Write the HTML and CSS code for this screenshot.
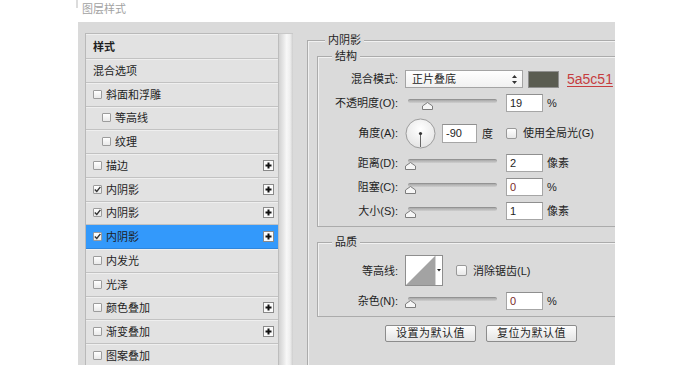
FILE: index.html
```html
<!DOCTYPE html>
<html lang="zh-CN">
<head>
<meta charset="utf-8">
<title>图层样式</title>
<link rel="stylesheet" href="styles.css">
</head>
<body>
<div class="titlebar"><span class="mark"></span><span class="title">图层样式</span></div>
<div class="panel">
  <div class="list">
    <div class="item first"><span class="name bold">样式</span></div>
    <div class="item"><span class="name">混合选项</span></div>
    <div class="item"><span class="cb"></span><span class="name">斜面和浮雕</span></div>
    <div class="item sub"><span class="cb"></span><span class="name">等高线</span></div>
    <div class="item sub"><span class="cb"></span><span class="name">纹理</span></div>
    <div class="item"><span class="cb"></span><span class="name">描边</span><span class="plus"><svg width="9" height="9" viewBox="0 0 9 9"><path d="M4.5 1.5V7.5M1.5 4.5H7.5" stroke="#111" stroke-width="2"/></svg></span></div>
    <div class="item"><span class="cb"><svg width="7" height="7" viewBox="0 0 7 7"><path d="M0.8 3.4L2.8 5.4L6.4 0.9" fill="none" stroke="#333" stroke-width="1.4"/></svg></span><span class="name">内阴影</span><span class="plus"><svg width="9" height="9" viewBox="0 0 9 9"><path d="M4.5 1.5V7.5M1.5 4.5H7.5" stroke="#111" stroke-width="2"/></svg></span></div>
    <div class="item"><span class="cb"><svg width="7" height="7" viewBox="0 0 7 7"><path d="M0.8 3.4L2.8 5.4L6.4 0.9" fill="none" stroke="#333" stroke-width="1.4"/></svg></span><span class="name">内阴影</span><span class="plus"><svg width="9" height="9" viewBox="0 0 9 9"><path d="M4.5 1.5V7.5M1.5 4.5H7.5" stroke="#111" stroke-width="2"/></svg></span></div>
    <div class="item selected"><span class="cb"><svg width="7" height="7" viewBox="0 0 7 7"><path d="M0.8 3.4L2.8 5.4L6.4 0.9" fill="none" stroke="#333" stroke-width="1.4"/></svg></span><span class="name">内阴影</span><span class="plus"><svg width="9" height="9" viewBox="0 0 9 9"><path d="M4.5 1.5V7.5M1.5 4.5H7.5" stroke="#111" stroke-width="2"/></svg></span></div>
    <div class="item"><span class="cb"></span><span class="name">内发光</span></div>
    <div class="item"><span class="cb"></span><span class="name">光泽</span></div>
    <div class="item"><span class="cb"></span><span class="name">颜色叠加</span><span class="plus"><svg width="9" height="9" viewBox="0 0 9 9"><path d="M4.5 1.5V7.5M1.5 4.5H7.5" stroke="#111" stroke-width="2"/></svg></span></div>
    <div class="item"><span class="cb"></span><span class="name">渐变叠加</span><span class="plus"><svg width="9" height="9" viewBox="0 0 9 9"><path d="M4.5 1.5V7.5M1.5 4.5H7.5" stroke="#111" stroke-width="2"/></svg></span></div>
    <div class="item"><span class="cb"></span><span class="name">图案叠加</span></div>
  </div>
  <div class="scrollbar"></div>
  <fieldset class="outer">
    <legend>内阴影</legend>
    <fieldset class="group">
      <legend>结构</legend>
      <div class="row">
        <span class="lbl">混合模式:</span>
        <span class="select"><span>正片叠底</span><svg width="5" height="9" viewBox="0 0 5 9"><path d="M2.5 0L5 3H0Z M0 6H5L2.5 9Z" fill="#333"/></svg></span>
        <span class="swatch"></span>
        <span class="hex">5a5c51</span>
      </div>
      <div class="row">
        <span class="lbl">不透明度(O):</span>
        <span class="slider"><span class="track"></span><svg class="thumb" style="left:17px" width="11" height="8" viewBox="0 0 11 8"><path d="M5.5 0.5L10.5 4V7.5H0.5V4Z" fill="#f6f6f6" stroke="#7d7d7d"/></svg></span>
        <span class="num">19</span><span class="unit">%</span>
      </div>
      <div class="row tall">
        <span class="lbl">角度(A):</span>
        <svg class="dial" width="31" height="31" viewBox="0 0 31 31"><defs><radialGradient id="dg" cx="50%" cy="35%" r="65%"><stop offset="0" stop-color="#ffffff"/><stop offset="1" stop-color="#e4e4e4"/></radialGradient></defs><circle cx="15.5" cy="15.5" r="14.5" fill="url(#dg)" stroke="#9c9c9c"/><line x1="15.5" y1="15.5" x2="15.5" y2="29" stroke="#666" stroke-width="1"/><circle cx="15.5" cy="15.5" r="1.6" fill="#333"/></svg>
        <span class="num angle">-90</span><span class="deg">度</span>
        <span class="box"></span><span class="boxlbl">使用全局光(G)</span>
      </div>
      <div class="row">
        <span class="lbl">距离(D):</span>
        <span class="slider"><span class="track"></span><svg class="thumb" style="left:0px" width="11" height="8" viewBox="0 0 11 8"><path d="M5.5 0.5L10.5 4V7.5H0.5V4Z" fill="#f6f6f6" stroke="#7d7d7d"/></svg></span>
        <span class="num">2</span><span class="unit">像素</span>
      </div>
      <div class="row">
        <span class="lbl">阻塞(C):</span>
        <span class="slider"><span class="track"></span><svg class="thumb" style="left:0px" width="11" height="8" viewBox="0 0 11 8"><path d="M5.5 0.5L10.5 4V7.5H0.5V4Z" fill="#f6f6f6" stroke="#7d7d7d"/></svg></span>
        <span class="num zero">0</span><span class="unit">%</span>
      </div>
      <div class="row">
        <span class="lbl">大小(S):</span>
        <span class="slider"><span class="track"></span><svg class="thumb" style="left:0px" width="11" height="8" viewBox="0 0 11 8"><path d="M5.5 0.5L10.5 4V7.5H0.5V4Z" fill="#f6f6f6" stroke="#7d7d7d"/></svg></span>
        <span class="num">1</span><span class="unit">像素</span>
      </div>
    </fieldset>
    <fieldset class="group quality">
      <legend>品质</legend>
      <div class="row tall2">
        <span class="lbl">等高线:</span>
        <svg class="contour" width="38" height="31" viewBox="0 0 38 31"><rect x="0.5" y="0.5" width="37" height="30" fill="#fff" stroke="#8e8e8e"/><path d="M1 30L30 1V30Z" fill="#a3a3a3"/><line x1="30.5" y1="1" x2="30.5" y2="30" stroke="#d4d4d4"/><path d="M32 14H36L34 16.5Z" fill="#222"/></svg>
        <span class="box gap2"></span><span class="boxlbl">消除锯齿(L)</span>
      </div>
      <div class="row">
        <span class="lbl">杂色(N):</span>
        <span class="slider"><span class="track"></span><svg class="thumb" style="left:0px" width="11" height="8" viewBox="0 0 11 8"><path d="M5.5 0.5L10.5 4V7.5H0.5V4Z" fill="#f6f6f6" stroke="#7d7d7d"/></svg></span>
        <span class="num zero">0</span><span class="unit">%</span>
      </div>
    </fieldset>
    <div class="buttons">
      <span class="btn">设置为默认值</span>
      <span class="btn">复位为默认值</span>
    </div>
  </fieldset>
</div>
</body>
</html>
```
FILE: styles.css
```css
* { box-sizing: border-box; }

html, body {
  margin: 0;
  padding: 0;
  background: #ffffff;
}

body {
  font-family: "Liberation Sans", "Noto Sans CJK SC", sans-serif;
  font-size: 11px;
  color: #1e1e1e;
  width: 690px;
  height: 370px;
  overflow: hidden;
}

.titlebar {
  height: 22px;
  display: flex;
  align-items: flex-start;
  padding-left: 76px;
}

.mark {
  width: 2px;
  height: 8px;
  background: #dcdcdc;
}

.title {
  margin-left: 4px;
  margin-top: 1px;
  line-height: 16px;
  font-size: 11px;
  color: #a2a2a2;
}

.panel {
  margin-left: 78px;
  width: 537px;
  height: 343px;
  background: #dadada;
  padding: 11px 0 0 7px;
  display: flex;
  align-items: flex-start;
  overflow: hidden;
}

/* ---------- left list ---------- */
.list {
  width: 193px;
  flex: none;
  border-left: 1px solid #b9b9b9;
  border-top: 1px solid #b9b9b9;
  background: #e2e2e2;
}

.item {
  height: 23.75px;
  display: flex;
  align-items: center;
  padding-left: 7px;
  border-bottom: 1px solid #c2c2c2;
  box-shadow: inset 0 1px 0 #efefef;
  white-space: nowrap;
}

.item.first {
  height: 25px;
}

.item.sub {
  padding-left: 16px;
}

.item.selected {
  background: #3399fb;
  border-bottom-color: #2f86dc;
  box-shadow: none;
}

.name {
  line-height: 14px;
  margin-top: 1px;
}

.name.bold {
  font-weight: bold;
}

.cb {
  width: 9px;
  height: 9px;
  flex: none;
  border: 1px solid #9c9c9c;
  border-radius: 1px;
  background: linear-gradient(#ffffff, #e9e9e9);
  margin-right: 4px;
  display: flex;
  align-items: center;
  justify-content: center;
}

.plus {
  margin-left: auto;
  margin-right: 4px;
  width: 11px;
  height: 11px;
  flex: none;
  border: 1px solid #8a8a8a;
  background: #fafafa;
  display: flex;
  align-items: center;
  justify-content: center;
}

.scrollbar {
  width: 15px;
  height: 340px;
  flex: none;
  border-left: 1px solid #bdbdbd;
  border-top: 1px solid #c8c8c8;
  background: linear-gradient(to right, #d2d2d2 0%, #e6e6e6 30%, #f8f8f8 55%, #ededed 80%, #cdcdcd 100%);
}

/* ---------- right side ---------- */
fieldset {
  margin: 0;
  padding: 0;
  min-width: 0;
  border: 1px solid #ababab;
  box-shadow: inset 1px 1px 0 #f1f1f1;
}

legend {
  font-size: 11px;
  line-height: 14px;
  padding: 0 3px;
  background: #dadada;
}

.outer {
  flex: none;
  margin-left: 14px;
  width: 330px;
  height: 345px;
}

.outer > legend {
  margin-left: 17px;
}

.group {
  margin: 2px 0 0 9px;
  width: 320px;
  padding: 7px 0 6px 0;
  display: flex;
  flex-direction: column;
  gap: 6px;
}

.group > legend {
  margin-left: 14px;
}

.group.quality {
  margin-top: 8px;
  padding-top: 6px;
}

.row {
  height: 18px;
  display: flex;
  align-items: center;
  white-space: nowrap;
}

.row.tall {
  height: 30px;
}

.row.tall2 {
  height: 31px;
}

.lbl {
  width: 80px;
  flex: none;
  text-align: right;
  margin-right: 7px;
  line-height: 18px;
}

.select {
  width: 118px;
  height: 18px;
  border: 1px solid #a4a4a4;
  background: linear-gradient(#ffffff, #f1f1f1);
  display: flex;
  align-items: center;
  justify-content: space-between;
  padding: 0 5px 0 6px;
  line-height: 16px;
}

.swatch {
  width: 31px;
  height: 17px;
  margin-left: 5px;
  background: #5a5c51;
  border: 1px solid #8f8f8f;
}

.hex {
  margin-left: 8px;
  font-family: "Liberation Sans", sans-serif;
  font-size: 14px;
  line-height: 16px;
  color: #c63d3f;
  text-decoration: underline;
  text-underline-offset: 2px;
}

.slider {
  position: relative;
  width: 95px;
  height: 18px;
  flex: none;
}

.track {
  position: absolute;
  left: 3px;
  right: 3px;
  top: 5px;
  height: 4px;
  border-radius: 2px;
  background: linear-gradient(#a9a9a9, #cfcfcf);
  border-top: 1px solid #939393;
}

.thumb {
  position: absolute;
  top: 8px;
}

.num {
  width: 37px;
  height: 18px;
  margin-left: 6px;
  flex: none;
  border: 1px solid #a6a6a6;
  border-top-color: #8f8f8f;
  background: #ffffff;
  padding-left: 3px;
  line-height: 16px;
}

.num.zero {
  color: #7a2a2a;
}

.unit {
  margin-left: 4px;
  line-height: 16px;
}

.dial {
  flex: none;
}

.num.angle {
  width: 35px;
  height: 19px;
  margin-left: 6px;
  line-height: 17px;
}

.deg {
  margin-left: 5px;
}

.box {
  width: 11px;
  height: 11px;
  flex: none;
  margin-left: 13px;
  border: 1px solid #999999;
  border-radius: 2px;
  background: linear-gradient(#ffffff, #e8e8e8);
}

.box.gap2 {
  margin-left: 13px;
}

.boxlbl {
  margin-left: 6px;
  line-height: 16px;
}

.contour {
  flex: none;
}

.buttons {
  margin-top: 8px;
  margin-left: 77px;
  display: flex;
  gap: 10px;
}

.btn {
  width: 91px;
  height: 17px;
  border: 1px solid #8c8c8c;
  border-radius: 2px;
  background: linear-gradient(#fdfdfd, #e4e4e4);
  display: flex;
  align-items: center;
  justify-content: center;
  line-height: 15px;
  letter-spacing: 0.5px;
}
```
